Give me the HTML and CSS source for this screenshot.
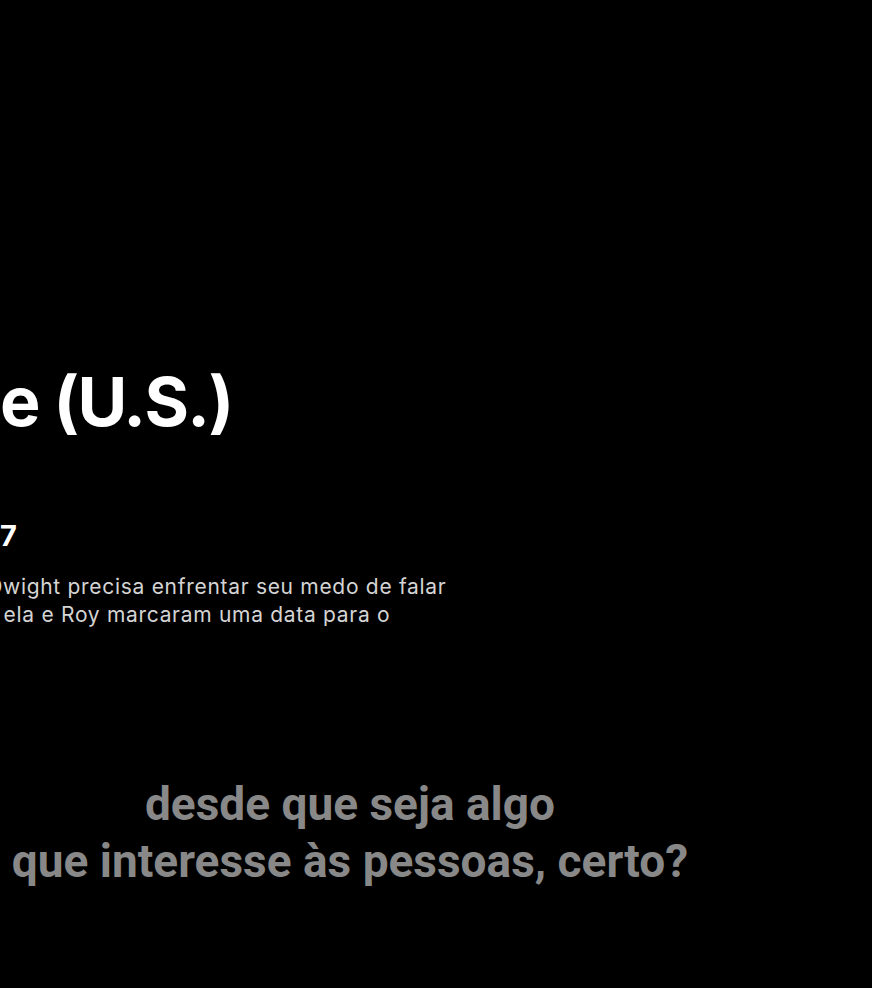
FILE: index.html
```html
<!DOCTYPE html>
<html lang="pt-BR">
<head>
<meta charset="utf-8">
<title>The Office (U.S.)</title>
<link rel="stylesheet" href="styles.css">
</head>
<body>
<main class="pause">
  <section class="info">
    <h1 class="title"><span class="cut cut-title">The Offic</span>e (U.S.)</h1>
    <p class="episode"><span class="cut cut-ep">T2:E</span>7</p>
    <p class="desc">
      <span class="line"><span class="cut cut-d1">No dia da palestra, D</span>wight precisa enfrentar seu medo de falar</span>
      <span class="line"><span class="cut cut-d2">Pam descobre que</span> ela e Roy marcaram uma data para o</span>
    </p>
  </section>
  <div class="subtitles">
    <p class="sub-line">desde que seja algo</p>
    <p class="sub-line">que interesse às pessoas, certo?</p>
  </div>
</main>
</body>
</html>
```

FILE: styles.css
```css
html, body {
  margin: 0;
  padding: 0;
  background: #000;
}
body {
  width: 872px;
  height: 988px;
  overflow: hidden;
  font-family: Inter, Roboto, "Liberation Sans", Arial, sans-serif;
}
.pause {
  display: flex;
  flex-direction: column;
  padding-top: 361px;
}
.info {
  display: flex;
  flex-direction: column;
  white-space: nowrap;
}
.cut {
  display: inline-block;
  width: 400px;
  text-align: right;
  white-space: nowrap;
}
.title {
  margin: 0;
  font-size: 68px;
  line-height: 80px;
  font-weight: 700;
  letter-spacing: -1.6px;
  color: #fff;
}
.cut-title { margin-left: -400px; }
.episode {
  margin: 77px 0 0;
  font-size: 29px;
  line-height: 36px;
  font-weight: 700;
  color: #fff;
}
.cut-ep { margin-left: -400px; }
.desc {
  margin: 19px 0 0;
  font-size: 21px;
  line-height: 28px;
  letter-spacing: 0.7px;
  color: #d4d4d4;
  display: flex;
  flex-direction: column;
}
.line { display: block; }
.cut-d1 { margin-left: -397px; }
.cut-d2 { margin-left: -403px; }
.subtitles {
  width: 700px;
  margin-top: 147px;
  text-align: center;
}
.sub-line {
  margin: 0;
  font-family: Roboto, "Liberation Sans", Arial, sans-serif;
  font-size: 46px;
  line-height: 57px;
  font-weight: 700;
  color: #888;
}
```
